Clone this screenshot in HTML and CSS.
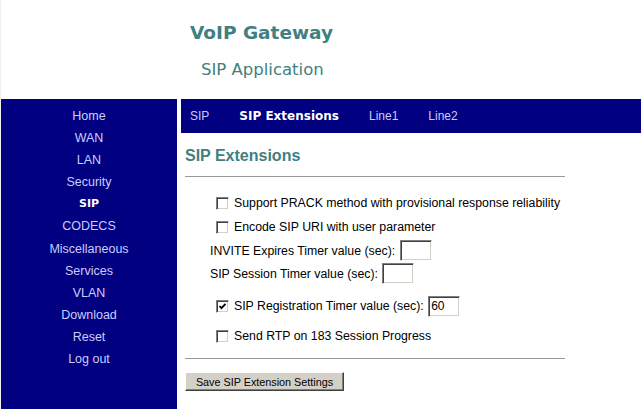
FILE: index.html
```html
<!DOCTYPE html>
<html lang="en">
<head>
    <meta charset="UTF-8">
    <title>SIP Extensions</title>
    <link rel="stylesheet" href="styles.css">
</head>
<body>
    <div class="header">
      <div class="title">VoIP Gateway</div>
      <div class="subtitle">SIP Application</div>
    </div>
    <div class="main">
      <ul class="nav">
        <li>Home</li>
        <li>WAN</li>
        <li>LAN</li>
        <li>Security</li>
        <li class="active">SIP</li>
        <li>CODECS</li>
        <li>Miscellaneous</li>
        <li>Services</li>
        <li>VLAN</li>
        <li>Download</li>
        <li>Reset</li>
        <li>Log out</li>
      </ul>
      <div class="content">
        <div class="tabs">
          <span>SIP</span>
          <span class="active">SIP Extensions</span>
          <span>Line1</span>
          <span>Line2</span>
        </div>
        <div class="page">
          <h2>SIP Extensions</h2>
          <hr>
          <form class="settings" action="">
            <div class="row check first"><span class="box"></span>Support PRACK method with provisional response reliability</div>
            <div class="row check"><span class="box"></span>Encode SIP URI with user parameter</div>
            <div class="row field">INVITE Expires Timer value (sec): <input class="num" type="text"></div>
            <div class="row field">SIP Session Timer value (sec): <input class="num" type="text"></div>
            <div class="row check reg"><span class="box"><svg width="9" height="9" viewBox="0 0 9 9"><polyline points="1.5,4 3.5,6.2 7.5,1.8" fill="none" stroke="#000" stroke-width="1.8"/></svg></span>SIP Registration Timer value (sec): <input class="num" type="text" value="60"></div>
            <div class="row check rtp"><span class="box"></span>Send RTP on 183 Session Progress</div>
          </form>
          <hr class="bottom">
          <button class="save">Save SIP Extension Settings</button>
        </div>
      </div>
    </div>
</body>
</html>
```

FILE: styles.css
```css
body {
  margin: 0;
  border-left: 1px solid #f0f0f0;
  font-family: "Liberation Sans", Arial, sans-serif;
  background: #fff;
}
.header {
  height: 99px;
  box-sizing: border-box;
  padding-top: 22px;
}
.title {
  margin-left: 189px;
  font: bold 18.5px/22px "DejaVu Sans", Verdana, sans-serif;
  color: #408080;
}
.subtitle {
  margin: 16px 0 0 200px;
  font: 16.5px/20px "DejaVu Sans", Verdana, sans-serif;
  color: #408080;
}
.main {
  display: flex;
  gap: 4px;
  min-height: calc(100vh - 99px);
}
.nav {
  width: 176px;
  flex: none;
  margin: 0;
  padding: 6px 0 0;
  list-style: none;
  background: #000080;
  text-align: center;
  color: #ccccff;
  font-size: 12.5px;
  line-height: 22.1px;
}
.nav .active {
  color: #fff;
  font: bold 11px/22.1px "DejaVu Sans", Verdana, sans-serif;
}
.content {
  flex: 1;
}
.tabs {
  display: flex;
  align-items: center;
  gap: 30px;
  height: 34px;
  padding-left: 9px;
  background: #000080;
  color: #ccccff;
  font-size: 12px;
}
.tabs .active {
  color: #fff;
  font: bold 12px "DejaVu Sans", Verdana, sans-serif;
}
.page {
  padding-left: 4px;
}
h2 {
  margin: 13px 0 0;
  font-size: 16px;
  line-height: 20px;
  color: #408080;
}
hr {
  width: 380px;
  height: 0;
  margin: 10px 0 0;
  border: 0;
  border-top: 1px solid #999;
}
.settings {
  margin: 0;
  font-size: 12.3px;
  color: #000;
}
.row {
  display: flex;
  align-items: center;
  white-space: pre;
}
.check {
  height: 24px;
  padding-left: 31px;
}
.field {
  height: 23px;
  padding-left: 25px;
}
.first {
  margin-top: 14px;
}
.reg {
  margin-top: 9px;
}
.rtp {
  margin-top: 6px;
}
.box {
  display: flex;
  align-items: center;
  justify-content: center;
  width: 13px;
  height: 13px;
  box-sizing: border-box;
  margin-right: 5px;
  background: #fff;
  border: 1px solid;
  border-color: #808080 #fff #fff #808080;
  box-shadow: inset 1px 1px #404040, inset -1px -1px #d4d0c8;
}
.num {
  width: 32px;
  height: 21px;
  box-sizing: border-box;
  margin: 0 0 0 1px;
  padding: 0 2px;
  font: 12px "Liberation Sans", Arial, sans-serif;
  background: #fff;
  border: 1px solid;
  border-color: #808080 #fff #fff #808080;
  box-shadow: inset 1px 1px #404040, inset -1px -1px #d4d0c8;
  outline: none;
}
.bottom {
  margin-top: 10px;
}
.save {
  display: block;
  width: 159px;
  height: 19px;
  margin-top: 13px;
  padding: 0;
  font: 10.8px "Liberation Sans", Arial, sans-serif;
  color: #000;
  background: #d4d0c8;
  border: 1px solid;
  border-color: #fff #404040 #404040 #fff;
  box-shadow: inset -1px -1px #808080;
}
```
